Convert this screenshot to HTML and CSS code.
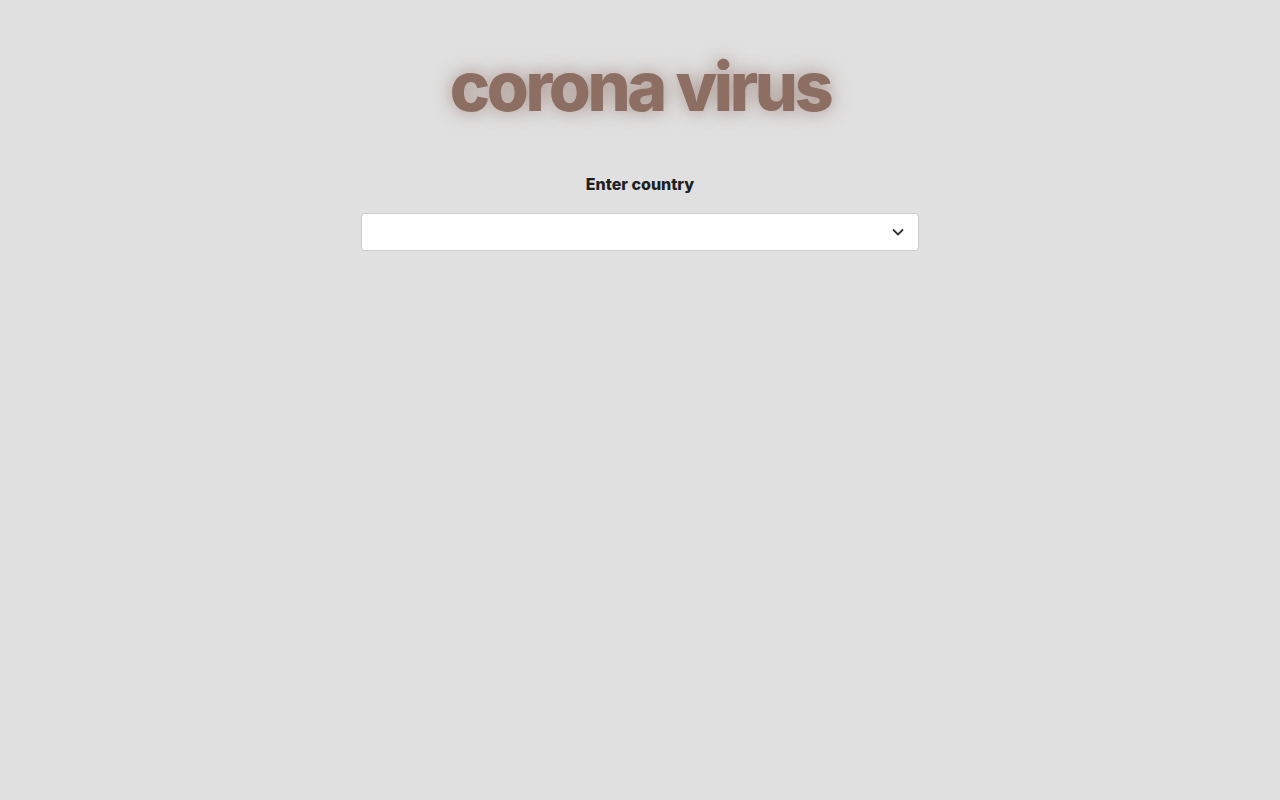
FILE: index.html
```html
<!DOCTYPE html>
<html lang="en">
<head>
<meta charset="utf-8">
<title>corona virus</title>
<link rel="stylesheet" href="styles.css">
</head>
<body>
<div class="app">
  <h1 class="title">corona virus</h1>
  <label class="label" for="country">Enter country</label>
  <div class="select" id="country">
    <div class="select-value"></div>
    <div class="select-indicator">
      <svg width="20" height="20" viewBox="0 0 20 20" aria-hidden="true"><path d="M5.5 8 L10 12.5 L14.5 8" fill="none" stroke="#333" stroke-width="1.8" stroke-linecap="round" stroke-linejoin="round"/></svg>
    </div>
  </div>
</div>
</body>
</html>
```
FILE: styles.css
```css
html, body {
  margin: 0;
  padding: 0;
  height: 100%;
  background: #e0e0e0;
  font-family: Inter, "Noto Sans", sans-serif;
}
.app {
  display: flex;
  flex-direction: column;
  align-items: center;
  padding-top: 46px;
}
.title {
  margin: 0;
  font-size: 68px;
  font-weight: 800;
  letter-spacing: -3.4px;
  line-height: 80px;
  color: #8d6e63;
  text-shadow: 0 0 18px rgba(141, 110, 99, 0.7);
}
.label {
  margin-top: 48px;
  font-size: 16px;
  font-weight: 800;
  color: #1f1f1f;
  line-height: 20px;
}
.select {
  margin-top: 19px;
  width: 556px;
  height: 36px;
  background: #fff;
  border: 1px solid #cccccc;
  border-radius: 4px;
  display: flex;
  align-items: center;
  justify-content: space-between;
}
.select-value {
  flex: 1;
}
.select-indicator {
  display: flex;
  align-items: center;
  padding-right: 10px;
}
```
